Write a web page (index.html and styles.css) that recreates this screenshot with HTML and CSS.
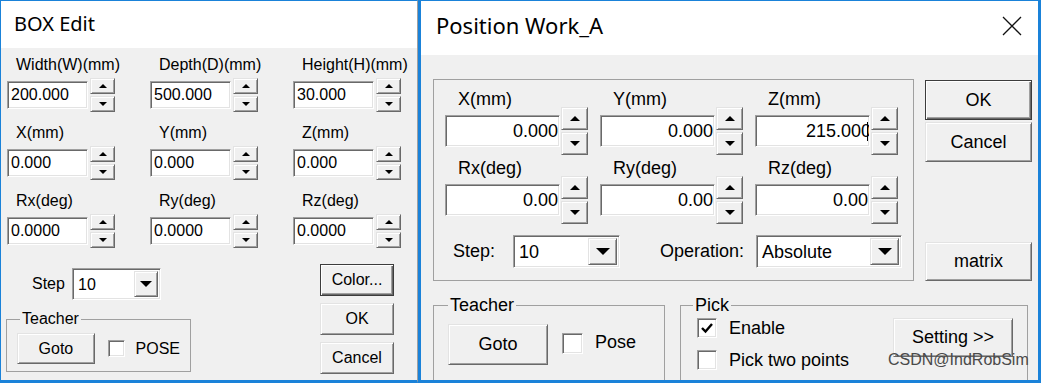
FILE: index.html
```html
<!DOCTYPE html>
<html lang="en">
<head>
<meta charset="utf-8">
<title>BOX Edit / Position Work_A</title>
<link rel="stylesheet" href="styles.css">
</head>
<body>
<div class="screen">

  <!-- left dialog -->
  <div class="dlg box-edit">
    <div class="caption">BOX Edit</div>
    <div class="client">
      <div class="fields">
        <div class="field">
          <div class="lbl">Width(W)(mm)</div>
          <div class="spin-row"><div class="edit">200.000</div><div class="spin"><span class="sbtn up"></span><span class="sbtn down"></span></div></div>
        </div>
        <div class="field">
          <div class="lbl">Depth(D)(mm)</div>
          <div class="spin-row"><div class="edit">500.000</div><div class="spin"><span class="sbtn up"></span><span class="sbtn down"></span></div></div>
        </div>
        <div class="field">
          <div class="lbl">Height(H)(mm)</div>
          <div class="spin-row"><div class="edit">30.000</div><div class="spin"><span class="sbtn up"></span><span class="sbtn down"></span></div></div>
        </div>
        <div class="field">
          <div class="lbl">X(mm)</div>
          <div class="spin-row"><div class="edit">0.000</div><div class="spin"><span class="sbtn up"></span><span class="sbtn down"></span></div></div>
        </div>
        <div class="field">
          <div class="lbl">Y(mm)</div>
          <div class="spin-row"><div class="edit">0.000</div><div class="spin"><span class="sbtn up"></span><span class="sbtn down"></span></div></div>
        </div>
        <div class="field">
          <div class="lbl">Z(mm)</div>
          <div class="spin-row"><div class="edit">0.000</div><div class="spin"><span class="sbtn up"></span><span class="sbtn down"></span></div></div>
        </div>
        <div class="field">
          <div class="lbl">Rx(deg)</div>
          <div class="spin-row"><div class="edit">0.0000</div><div class="spin"><span class="sbtn up"></span><span class="sbtn down"></span></div></div>
        </div>
        <div class="field">
          <div class="lbl">Ry(deg)</div>
          <div class="spin-row"><div class="edit">0.0000</div><div class="spin"><span class="sbtn up"></span><span class="sbtn down"></span></div></div>
        </div>
        <div class="field">
          <div class="lbl">Rz(deg)</div>
          <div class="spin-row"><div class="edit">0.0000</div><div class="spin"><span class="sbtn up"></span><span class="sbtn down"></span></div></div>
        </div>
      </div>

      <div class="lower">
        <div class="lower-left">
          <div class="step-row">
            <span class="step-lbl">Step</span>
            <div class="combo"><span class="val">10</span><span class="drop"></span></div>
          </div>
          <fieldset class="group teacher">
            <legend>Teacher</legend>
            <button class="btn goto">Goto</button>
            <span class="chk"></span>
            <span class="chk-lbl">POSE</span>
          </fieldset>
        </div>
        <div class="btn-col">
          <button class="btn default">Color...</button>
          <button class="btn">OK</button>
          <button class="btn">Cancel</button>
        </div>
      </div>
    </div>
  </div>

  <!-- right dialog -->
  <div class="dlg pos-work">
    <div class="caption">
      <span>Position Work_A</span>
      <svg class="close" width="20" height="20" viewBox="0 0 20 20">
        <path d="M1 1 L19 19 M19 1 L1 19" stroke="#111" stroke-width="1.3" fill="none"/>
      </svg>
    </div>
    <div class="client">
      <div class="top-row">
        <div class="group coords">
          <div class="fields">
            <div class="field">
              <div class="lbl">X(mm)</div>
              <div class="spin-row"><div class="edit">0.000</div><div class="spin"><span class="sbtn up"></span><span class="sbtn down"></span></div></div>
            </div>
            <div class="field">
              <div class="lbl">Y(mm)</div>
              <div class="spin-row"><div class="edit">0.000</div><div class="spin"><span class="sbtn up"></span><span class="sbtn down"></span></div></div>
            </div>
            <div class="field">
              <div class="lbl">Z(mm)</div>
              <div class="spin-row"><div class="edit">215.000<span class="caret"></span></div><div class="spin"><span class="sbtn up"></span><span class="sbtn down"></span></div></div>
            </div>
            <div class="field">
              <div class="lbl">Rx(deg)</div>
              <div class="spin-row"><div class="edit">0.00</div><div class="spin"><span class="sbtn up"></span><span class="sbtn down"></span></div></div>
            </div>
            <div class="field">
              <div class="lbl">Ry(deg)</div>
              <div class="spin-row"><div class="edit">0.00</div><div class="spin"><span class="sbtn up"></span><span class="sbtn down"></span></div></div>
            </div>
            <div class="field">
              <div class="lbl">Rz(deg)</div>
              <div class="spin-row"><div class="edit">0.00</div><div class="spin"><span class="sbtn up"></span><span class="sbtn down"></span></div></div>
            </div>
          </div>
          <div class="step-row">
            <span class="step-lbl">Step:</span>
            <div class="combo step"><span class="val">10</span><span class="drop"></span></div>
            <span class="op-lbl">Operation:</span>
            <div class="combo op"><span class="val">Absolute</span><span class="drop"></span></div>
          </div>
        </div>
        <div class="btn-col">
          <button class="btn default">OK</button>
          <button class="btn cancel">Cancel</button>
          <button class="btn matrix">matrix</button>
        </div>
      </div>

      <div class="bottom-row">
        <fieldset class="group teacher">
          <legend>Teacher</legend>
          <button class="btn goto">Goto</button>
          <span class="chk"></span>
          <span class="chk-lbl">Pose</span>
        </fieldset>
        <fieldset class="group pick">
          <legend>Pick</legend>
          <div class="chk-list">
            <div class="chk-row">
              <span class="chk">
                <svg width="14" height="14" viewBox="0 0 14 14"><path d="M2 7 L5.5 10.5 L12 3" stroke="#000" stroke-width="2.4" fill="none"/></svg>
              </span>
              <span class="chk-lbl">Enable</span>
            </div>
            <div class="chk-row">
              <span class="chk"></span>
              <span class="chk-lbl">Pick two points</span>
            </div>
          </div>
          <button class="btn setting">Setting &gt;&gt;</button>
        </fieldset>
      </div>
    </div>
  </div>

  <div class="watermark">CSDN@IndRobSim</div>
</div>
</body>
</html>
```

FILE: styles.css
```css
body {
    margin: 0;
    background: #fff;
    font-family: "Liberation Sans", Arial, sans-serif;
    color: #000;
}

.screen {
    position: relative;
    display: flex;
    width: 1041px;
    height: 383px;
    overflow: hidden;
}

/* window frame */
.dlg {
    display: flex;
    flex-direction: column;
    box-sizing: border-box;
    height: 383px;
    border: 0 solid #1a82d9;
    background: #fff;
}

.box-edit {
    width: 418px;
    border-width: 1px 1px 3px 1px;
    border-right-color: #a0a0a0;
}

.pos-work {
    width: 623px;
    border-width: 1px 3px 3px 3px;
}

.caption {
    display: flex;
    flex-shrink: 0;
    font-family: "Noto Sans", "Liberation Sans", sans-serif;
    white-space: nowrap;
}

.box-edit .caption {
    height: 47px;
    line-height: 45px;
    padding-left: 13px;
    font-size: 20px;
}

.pos-work .caption {
    height: 54px;
    line-height: 48px;
    padding: 0 16px 0 15px;
    font-size: 22px;
}

.caption .close {
    margin: 15px 0 0 auto;
}

.client {
    flex: 1;
    background: #f0f0f0;
    overflow: hidden;
}

.box-edit .client {
    padding: 8px 0 0 6px;
    font-size: 16px;
}

.pos-work .client {
    padding: 24px 0 0 12px;
    font-size: 18px;
}

/* 3d borders */
.edit,
.combo,
.chk {
    box-sizing: border-box;
    background: #fff;
    border: 1px solid;
    border-color: #a0a0a0 #fff #fff #a0a0a0;
    box-shadow: inset 1px 1px #696969, inset -1px -1px #e3e3e3;
}

.btn,
.sbtn,
.drop {
    box-sizing: border-box;
    background: #f0f0f0;
    border: 1px solid;
    border-color: #e3e3e3 #696969 #696969 #e3e3e3;
    box-shadow: inset 1px 1px #fff, inset -1px -1px #a0a0a0;
}

.btn {
    font-family: inherit;
    font-size: inherit;
    color: #000;
    padding: 0;
}

.btn.default {
    border-color: #3c3c3c;
    box-shadow: inset 1px 1px #fff, inset -1px -1px #696969, inset -2px -2px #a0a0a0;
}

/* spin fields */
.fields {
    display: grid;
}

.lbl {
    white-space: nowrap;
}

.spin-row {
    display: flex;
    align-items: center;
}

.edit {
    white-space: nowrap;
    overflow: hidden;
}

.spin {
    display: flex;
    flex-direction: column;
}

.sbtn {
    display: flex;
    align-items: center;
    justify-content: center;
}

.sbtn::before,
.drop::before {
    content: "";
    border-left: 4px solid transparent;
    border-right: 4px solid transparent;
}

.sbtn.up::before {
    border-bottom: 4px solid #000;
}

.sbtn.down::before,
.drop::before {
    border-top: 4px solid #000;
}

/* left dialog sizes */
.box-edit .fields {
    grid-template-columns: 143px 143px 130px;
    row-gap: 12px;
}

.box-edit .lbl {
    height: 18px;
    line-height: 18px;
    padding-left: 9px;
    margin-bottom: 4px;
}

.box-edit .spin-row {
    height: 34px;
    gap: 2px;
}

.box-edit .edit {
    width: 81px;
    height: 28px;
    line-height: 26px;
    padding-left: 3px;
}

.box-edit .spin {
    width: 25px;
    gap: 2px;
}

.box-edit .sbtn {
    height: 16px;
}

.lower {
    display: flex;
    margin: 16px 0 0 -6px;
}

.box-edit .step-row {
    display: flex;
    align-items: center;
    margin-top: 4px;
    padding-left: 31px;
}

.box-edit .step-lbl {
    width: 40px;
}

.combo {
    display: flex;
    padding: 2px;
}

.combo .val {
    flex: 1;
    white-space: nowrap;
}

.drop {
    display: flex;
    align-items: center;
    justify-content: center;
}

.box-edit .combo {
    width: 89px;
    height: 32px;
}

.box-edit .combo .val {
    line-height: 28px;
    padding-left: 3px;
}

.box-edit .drop {
    width: 24px;
}

.box-edit .drop::before {
    border-width: 6px 6px 0 6px;
}

.group {
    margin: 0;
    border: 1px solid #a0a0a0;
    min-width: 0;
}

.group legend {
    padding: 0 2px;
}

.box-edit .teacher {
    display: flex;
    align-items: center;
    box-sizing: border-box;
    width: 185px;
    margin: 10px 0 0 5px;
    padding: 5px 10px 7px;
}

.box-edit .teacher legend {
    margin-left: 3px;
    line-height: 18px;
}

.box-edit .goto {
    width: 79px;
    height: 31px;
}

.box-edit .chk {
    width: 17px;
    height: 17px;
    margin-left: 13px;
}

.box-edit .chk-lbl {
    margin-left: 11px;
}

.box-edit .btn-col {
    display: flex;
    flex-direction: column;
    gap: 7px;
    margin: 0 23px 0 auto;
}

.box-edit .btn-col .btn {
    width: 74px;
    height: 32px;
}

/* right dialog sizes */
.top-row {
    display: flex;
    align-items: stretch;
}

.coords {
    box-sizing: border-box;
    width: 481px;
    padding: 9px 0 12px 11px;
}

.pos-work .fields {
    grid-template-columns: 155px 155px 150px;
    row-gap: 3px;
}

.pos-work .lbl {
    height: 20px;
    line-height: 20px;
    padding-left: 13px;
    margin-bottom: -2px;
}

.pos-work .spin-row {
    height: 48px;
    gap: 1px;
}

.pos-work .edit {
    width: 115px;
    height: 32px;
    line-height: 30px;
    padding-right: 1px;
    text-align: right;
}

.caret {
    display: inline-block;
    width: 1px;
    height: 19px;
    margin-left: -4px;
    vertical-align: -4px;
    background: #000;
}

.pos-work .spin {
    width: 27px;
    gap: 2px;
}

.pos-work .sbtn {
    height: 23px;
}

.pos-work .sbtn::before {
    border-width: 0 5px 5px 5px;
}

.pos-work .sbtn.down::before {
    border-width: 5px 5px 0 5px;
}

.pos-work .step-row {
    display: flex;
    align-items: center;
    margin-top: 11px;
    padding-left: 8px;
}

.pos-work .step-lbl {
    width: 60px;
}

.pos-work .combo {
    height: 33px;
}

.pos-work .combo .val {
    line-height: 29px;
    padding-left: 3px;
}

.pos-work .combo.step {
    width: 107px;
}

.pos-work .combo.op {
    width: 146px;
}

.op-lbl {
    width: 96px;
    margin-left: 40px;
}

.pos-work .drop {
    width: 29px;
}

.pos-work .drop::before {
    border-width: 7px 7px 0 7px;
}

.pos-work .btn-col {
    display: flex;
    flex-direction: column;
    width: 107px;
    margin: 1px 0 0 11px;
}

.pos-work .btn-col .btn {
    height: 40px;
}

.pos-work .btn-col .cancel {
    margin-top: 2px;
}

.pos-work .btn-col .matrix {
    height: 39px;
    margin-top: auto;
}

.bottom-row {
    display: flex;
    margin-top: 14px;
}

.pos-work .group legend {
    line-height: 20px;
}

.pos-work .teacher {
    display: flex;
    align-items: flex-start;
    box-sizing: border-box;
    width: 232px;
    height: 110px;
    padding: 9px 14px 0;
}

.pos-work .goto {
    width: 100px;
    height: 41px;
}

.pos-work .teacher .chk {
    width: 21px;
    height: 21px;
    margin: 9px 0 0 14px;
}

.pos-work .teacher .chk-lbl {
    margin: 8px 0 0 12px;
}

.pick {
    display: flex;
    align-items: flex-start;
    box-sizing: border-box;
    width: 348px;
    height: 110px;
    margin-left: 15px;
    padding: 3px 14px 0 16px;
}

.pick legend {
    margin-left: -4px;
}

.chk-list {
    display: flex;
    flex-direction: column;
    gap: 12px;
}

.chk-row {
    display: flex;
    align-items: center;
    height: 20px;
}

.pick .chk {
    display: flex;
    align-items: center;
    justify-content: center;
    width: 20px;
    height: 20px;
}

.pick .chk-lbl {
    margin-left: 12px;
}

.setting {
    width: 120px;
    height: 39px;
    margin-left: auto;
}

.watermark {
    position: absolute;
    left: 888px;
    top: 350px;
    font-size: 16px;
    line-height: 20px;
    color: #4a4a4a;
}
```
